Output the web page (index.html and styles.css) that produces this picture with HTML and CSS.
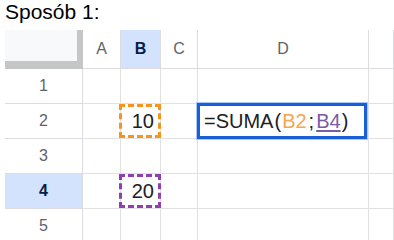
FILE: index.html
```html
<!DOCTYPE html>
<html lang="pl">
<head>
    <meta charset="UTF-8">
    <title>Sposób 1</title>
    <link rel="stylesheet" href="styles.css">
</head>
<body>
    <div class="title">Sposób 1:</div>

    <!-- Sheet grid -->
    <div class="sheet">
        <!-- Header row -->
        <div class="cell corner"></div>
        <div class="cell col-head">A</div>
        <div class="cell col-head active">B</div>
        <div class="cell col-head">C</div>
        <div class="cell col-head">D</div>
        <div class="cell col-head"></div>

        <!-- Row 1 -->
        <div class="cell row-head">1</div>
        <div class="cell"></div>
        <div class="cell"></div>
        <div class="cell"></div>
        <div class="cell"></div>
        <div class="cell"></div>

        <!-- Row 2 -->
        <div class="cell row-head">2</div>
        <div class="cell"></div>
        <div class="cell value">
            <div class="ref ref-orange">10</div>
        </div>
        <div class="cell"></div>
        <div class="cell value">
            <div class="editor">=SUMA<span class="paren">(</span><span class="orange">B2</span><span class="semi">;</span><span class="purple">B4</span><span class="paren">)</span></div>
        </div>
        <div class="cell"></div>

        <!-- Row 3 -->
        <div class="cell row-head">3</div>
        <div class="cell"></div>
        <div class="cell"></div>
        <div class="cell"></div>
        <div class="cell"></div>
        <div class="cell"></div>

        <!-- Row 4 -->
        <div class="cell row-head active">4</div>
        <div class="cell"></div>
        <div class="cell value">
            <div class="ref ref-purple">20</div>
        </div>
        <div class="cell"></div>
        <div class="cell"></div>
        <div class="cell"></div>

        <!-- Row 5 -->
        <div class="cell row-head">5</div>
        <div class="cell"></div>
        <div class="cell"></div>
        <div class="cell"></div>
        <div class="cell"></div>
        <div class="cell"></div>
    </div>
</body>
</html>
```

FILE: styles.css
```css
body {
    margin: 0;
    padding: 0 0 0 5px;
    background-color: #fff;
    font-family: "Liberation Sans", Arial, sans-serif;
    color: #000;
    overflow: hidden;
}

.title {
    font-size: 21px;
    line-height: 24px;
    margin-bottom: 6px;
}

.sheet {
    display: grid;
    grid-template-columns: 78px 38px 40px 37px 171px 1fr;
    grid-template-rows: 39px repeat(5, 35px);
}

.cell {
    box-sizing: border-box;
    border-right: 1px solid #e1e1e1;
    border-bottom: 1px solid #e1e1e1;
    display: flex;
    align-items: center;
    justify-content: center;
}

.corner {
    background-color: #f8f9fa;
    border-right: 6px solid #c4c7c5;
    border-bottom: 8px solid #c4c7c5;
}

.col-head,
.row-head {
    font-size: 16px;
    color: #5f6368;
    border-color: #dadce0;
}

.active {
    background-color: #d3e3fd;
    color: #041e49;
    font-weight: bold;
}

.value {
    position: relative;
}

/* Dashed range highlight */
.ref {
    position: absolute;
    top: 0;
    bottom: 0;
    left: -2px;
    right: -1px;
    box-sizing: border-box;
    border: 3px dashed;
    display: flex;
    align-items: center;
    justify-content: flex-end;
    padding-right: 4px;
    font-size: 20px;
    color: #202124;
}

.ref-orange {
    border-color: #f7941d;
}

.ref-purple {
    border-color: #8e3fb0;
}

/* Formula editor */
.editor {
    position: absolute;
    top: -1px;
    left: -1px;
    width: 170px;
    height: 36px;
    box-sizing: border-box;
    border: 3px solid #1a5fd6;
    box-shadow: 0 0 0 1px #a8c7fa;
    background-color: #fff;
    display: flex;
    align-items: center;
    padding-left: 4px;
    font-size: 20px;
    color: #202124;
    white-space: nowrap;
}

.paren {
    margin: 0 1px;
}

.semi {
    margin: 0 2px;
}

.orange {
    color: #f6a64f;
}

.purple {
    color: #7b5aa6;
    text-decoration: underline;
    text-decoration-thickness: 2px;
    text-underline-offset: 2px;
}
```
